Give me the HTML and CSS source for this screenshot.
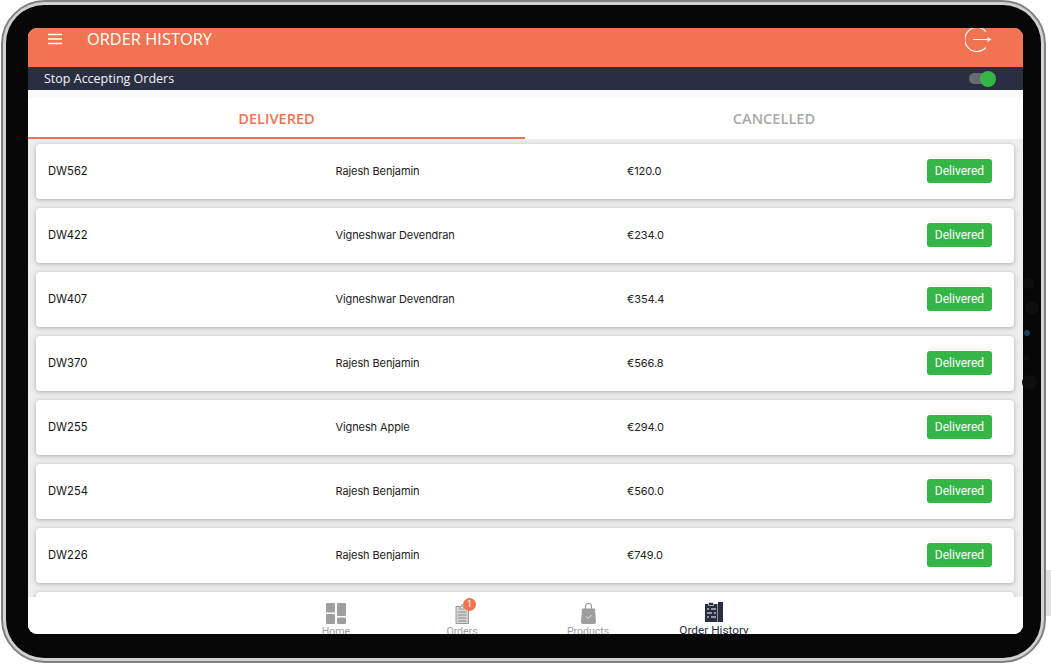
FILE: index.html
```html
<!DOCTYPE html>
<html lang="en">

<head>
  <meta charset="UTF-8">
  <meta name="viewport" content="width=device-width, initial-scale=1.0">
  <title>Order History</title>
  <link rel="stylesheet" href="styles.css">
</head>

<body>
  <div class="device">
    <span class="side-key side-key-right"></span>
    <span class="side-key side-key-bottom-1"></span>
    <span class="side-key side-key-bottom-2"></span>
    <div class="bezel">
      <span class="sensor sensor-1"></span>
      <span class="sensor sensor-2"></span>
      <span class="sensor sensor-3"></span>
      <span class="sensor sensor-4"></span>
      <span class="sensor sensor-5"></span>
      <div class="screen">

        <div class="app-bar">
          <svg class="menu-icon" width="14" height="12" viewBox="0 0 14 12">
            <path d="M0 1.500h14M0 6h14M0 10.500h14" stroke="#fff" stroke-width="1.400" fill="none" />
          </svg>
          <div class="app-title">ORDER HISTORY</div>
          <svg class="logout-icon" width="27" height="27" viewBox="0 0 27 27">
            <path d="M20.800 4.500A12 12 0 1 0 20.800 20.500" stroke="#fff" stroke-width="1.200" fill="none" />
            <path d="M8 12.500h15" stroke="#fff" stroke-width="1.200" fill="none" />
            <path d="M22.500 10l4 2.500-4 2.500z" fill="#fff" />
          </svg>
        </div>

        <div class="accept-bar">
          <span>Stop Accepting Orders</span>
          <div class="toggle"><div class="toggle-knob"></div></div>
        </div>

        <div class="tabs">
          <div class="tab tab-active">DELIVERED</div>
          <div class="tab">CANCELLED</div>
        </div>

        <div class="order-list">
          <div class="order-card">
            <div class="order-id">DW562</div>
            <div class="order-name">Rajesh Benjamin</div>
            <div class="order-price">€120.0</div>
            <div class="order-status">Delivered</div>
          </div>
          <div class="order-card">
            <div class="order-id">DW422</div>
            <div class="order-name">Vigneshwar Devendran</div>
            <div class="order-price">€234.0</div>
            <div class="order-status">Delivered</div>
          </div>
          <div class="order-card">
            <div class="order-id">DW407</div>
            <div class="order-name">Vigneshwar Devendran</div>
            <div class="order-price">€354.4</div>
            <div class="order-status">Delivered</div>
          </div>
          <div class="order-card">
            <div class="order-id">DW370</div>
            <div class="order-name">Rajesh Benjamin</div>
            <div class="order-price">€566.8</div>
            <div class="order-status">Delivered</div>
          </div>
          <div class="order-card">
            <div class="order-id">DW255</div>
            <div class="order-name">Vignesh Apple</div>
            <div class="order-price">€294.0</div>
            <div class="order-status">Delivered</div>
          </div>
          <div class="order-card">
            <div class="order-id">DW254</div>
            <div class="order-name">Rajesh Benjamin</div>
            <div class="order-price">€560.0</div>
            <div class="order-status">Delivered</div>
          </div>
          <div class="order-card">
            <div class="order-id">DW226</div>
            <div class="order-name">Rajesh Benjamin</div>
            <div class="order-price">€749.0</div>
            <div class="order-status">Delivered</div>
          </div>
          <div class="order-card"></div>
        </div>

        <div class="bottom-nav">
          <div class="nav-item nav-home">
            <svg width="20" height="21" viewBox="0 0 20 21">
              <rect x="0" y="0" width="9" height="9.500" rx="1" fill="#9e9e9e" />
              <rect x="0" y="11" width="9" height="10" rx="1" fill="#9e9e9e" />
              <rect x="11" y="0" width="9" height="13" rx="1" fill="#9e9e9e" />
              <rect x="11" y="14.500" width="9" height="6.500" rx="1" fill="#9e9e9e" />
            </svg>
            <span>Home</span>
          </div>
          <div class="nav-item nav-orders">
            <svg width="17" height="21" viewBox="0 0 17 21">
              <path d="M2 3.500h12.500v17H2z" fill="#d4d4d4" stroke="#9a9a9a" />
              <path d="M4 9h8.500M4 12h8.500M4 15h8.500M4 18h8.500" stroke="#8a8a8a" stroke-width="1" />
              <path d="M5.500 6l2.500-4.500 2.500 4.500z" fill="#e8e8e8" stroke="#8a8a8a" stroke-width="0.800" />
            </svg>
            <span class="nav-badge">1</span>
            <span>Orders</span>
          </div>
          <div class="nav-item nav-products">
            <svg width="15" height="21" viewBox="0 0 15 21">
              <path d="M1 5.500h13l1 13.500a2 2 0 0 1-2 2H2a2 2 0 0 1-2-2z" fill="#9e9e9e" />
              <path d="M4.500 8V3.500a3 3 0 0 1 6 0V8" stroke="#9e9e9e" stroke-width="1.200" fill="none" />
              <path d="M5 13.500l2 2 3.500-3.500" stroke="#eee" stroke-width="1" fill="none" />
            </svg>
            <span>Products</span>
          </div>
          <div class="nav-item nav-history nav-active">
            <svg width="18" height="20" viewBox="0 0 18 20">
              <rect x="0" y="2" width="12.500" height="18" fill="#2a2e43" />
              <rect x="13" y="0" width="5" height="20" fill="#2a2e43" />
              <path d="M3.500 0.500h5v3h-5z" fill="#2a2e43" stroke="#e4e4e4" stroke-width="0.700" />
              <path d="M2 7h2M6 7h5M2 11h5M9 11h2M2 15h2M6 15h5" stroke="#fff" stroke-width="1.100" />
            </svg>
            <span>Order History</span>
          </div>
        </div>

      </div>
    </div>
  </div>
</body>

</html>
```

FILE: styles.css
```css
* {
  box-sizing: border-box;
}

body {
  margin: 0;
  background: #fff;
  font-family: "Inter", "Liberation Sans", sans-serif;
  overflow: hidden;
}

.device {
  position: relative;
  width: 1045px;
  height: 663px;
  margin-left: 1px;
  padding: 3px;
  background: #d2d2d2;
  border: 2px solid #808080;
  border-radius: 44px;
}

.side-key {
  position: absolute;
  background: #e2e2e2;
  z-index: -1;
}

.side-key-right { top: 568px; right: -7px; width: 5px; height: 46px; }
.side-key-bottom-1 { bottom: -6px; left: 858px; width: 44px; height: 4px; }
.side-key-bottom-2 { bottom: -6px; left: 912px; width: 44px; height: 4px; }

.bezel {
  position: relative;
  height: 100%;
  padding: 23px 18px 24px 22px;
  background: #070707;
  border-radius: 38px;
}

.sensor {
  position: absolute;
  border-radius: 50%;
  background: #0e0e0e;
}

.sensor-1 { top: 273px; right: 7px; width: 11px; height: 11px; }
.sensor-2 { top: 296px; right: 2px; width: 14px; height: 14px; }
.sensor-3 { top: 325px; right: 11px; width: 6px; height: 6px; background: #1d3f66; }
.sensor-4 { top: 350px; right: 12px; width: 6px; height: 6px; }
.sensor-5 { top: 370px; right: 4px; width: 15px; height: 15px; }

.screen {
  display: flex;
  flex-direction: column;
  height: 606px;
  background: #eee;
  border-radius: 9px;
  overflow: hidden;
}

.app-bar {
  display: flex;
  align-items: flex-start;
  flex: none;
  height: 39px;
  background: #f27351;
  color: #fff;
}

.menu-icon {
  margin: 5px 0 0 20px;
}

.app-title {
  margin: 0 0 0 25px;
  font-family: "Open Sans", "Liberation Sans", sans-serif;
  font-size: 16.400px;
  font-weight: 500;
  line-height: 22px;
}

.logout-icon {
  margin: -1px 31px 0 auto;
}

.accept-bar {
  display: flex;
  align-items: center;
  justify-content: space-between;
  flex: none;
  height: 23px;
  padding: 0 28px 0 16px;
  background: #2a2e43;
  color: #f4f4f4;
  font-family: "Open Sans", "Liberation Sans", sans-serif;
  font-size: 12.500px;
}

.toggle {
  display: flex;
  align-items: center;
  justify-content: flex-end;
  width: 26px;
  height: 11px;
  background: #686c72;
  border-radius: 6px;
}

.toggle-knob {
  width: 16px;
  height: 16px;
  flex: none;
  margin-right: -1px;
  background: #35b546;
  border-radius: 50%;
}

.tabs {
  display: flex;
  flex: none;
  height: 49px;
  padding-top: 8px;
  background: linear-gradient(#fafafa 8px, #fff 8px);
}

.tab {
  flex: 1;
  padding-top: 11px;
  color: #a9a9a9;
  font-family: "Open Sans", "Liberation Sans", sans-serif;
  font-size: 14.600px;
  font-weight: 600;
  line-height: 18px;
  text-align: center;
}

.tab-active {
  flex: 0 0 497px;
  color: #f27351;
  border-bottom: 2px solid #f27351;
}

.order-list {
  flex: 1;
  min-height: 0;
  padding: 5px 9px 0 8px;
  overflow: hidden;
}

.order-card {
  display: flex;
  align-items: center;
  flex: none;
  height: 55px;
  margin-bottom: 9px;
  padding: 0 22px 1px 12px;
  background: #fff;
  border-radius: 4px;
  box-shadow: 0 1px 5px rgba(0, 0, 0, 0.28);
  font-size: 11px;
  color: #222;
}

.order-id {
  width: 287.500px;
  font-size: 11.200px;
  color: #111;
}

.order-name {
  width: 291.500px;
  letter-spacing: -0.100px;
}

.order-price {
  letter-spacing: -0.100px;
}

.order-status {
  margin-left: auto;
  width: 65px;
  height: 24px;
  background: #35b546;
  border-radius: 3px;
  color: #fff;
  font-family: "Roboto", "Liberation Sans", sans-serif;
  font-size: 12px;
  line-height: 24px;
  text-align: center;
}

.bottom-nav {
  position: relative;
  flex: none;
  display: flex;
  height: 37px;
  padding-left: 272px;
  background: #fff;
  overflow: hidden;
}

.nav-item {
  position: relative;
  display: flex;
  flex-direction: column;
  align-items: center;
  width: 72px;
  padding-top: 6px;
  color: #9e9e9e;
  font-family: "Roboto", "Liberation Sans", sans-serif;
  font-size: 10.500px;
  line-height: 12px;
}

.nav-item svg {
  flex: none;
  margin-bottom: 2px;
}

.nav-orders { margin-left: 54px; }
.nav-products { margin-left: 54px; }
.nav-history { margin-left: 54px; width: 72px; padding-top: 5px; }

.nav-active {
  color: #2a2e43;
  font-size: 11.800px;
}

.nav-badge {
  position: absolute;
  top: 1px;
  left: 37px;
  width: 13px;
  height: 13px;
  background: #f27351;
  border-radius: 50%;
  color: #fff;
  font-size: 9px;
  line-height: 13px;
  text-align: center;
}
```
